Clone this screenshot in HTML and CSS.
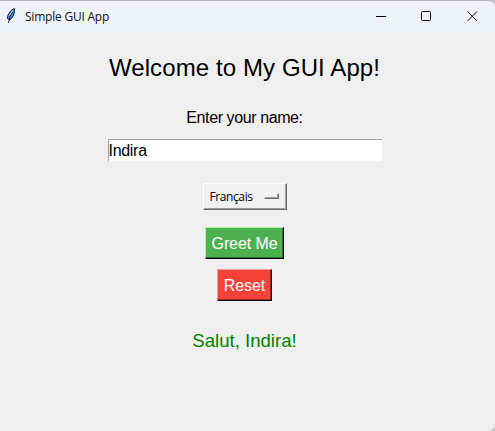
FILE: index.html
```html
<!DOCTYPE html>
<html lang="en">
<head>
<meta charset="utf-8">
<title>Simple GUI App</title>
<link rel="stylesheet" href="styles.css">
</head>
<body>
<div class="window">
  <header class="titlebar">
    <svg class="feather" width="10" height="17" viewBox="0 0 10 17">
      <path d="M8.500 1.500C5 3 1.500 6.500 1.500 11.500L3.500 13C7 11 9 6 8.500 1.500Z" fill="#4b8fe0" stroke="#10151c" stroke-width="1"/>
      <path d="M6.500 5L4 9.500L2.500 16" fill="none" stroke="#10151c" stroke-width="0.900"/>
      <path d="M6.500 3.800L3.200 8.500" stroke="#b9dcff" stroke-width="0.900"/>
    </svg>
    <span class="caption">Simple GUI App</span>
    <svg class="ctl" width="46" height="31" viewBox="0 0 46 31"><path d="M18 15.500H28" stroke="#000"/></svg>
    <svg class="ctl" width="46" height="31" viewBox="0 0 46 31"><rect x="17.500" y="10.500" width="9" height="9" rx="1" fill="none" stroke="#000"/></svg>
    <svg class="ctl" width="45" height="31" viewBox="0 0 45 31"><path d="M17.500 10.500L27 20M27 10.500L17.500 20" stroke="#000"/></svg>
  </header>
  <main class="content">
    <h1 class="heading">Welcome to My GUI App!</h1>
    <label class="label" for="name">Enter your name:</label>
    <input class="entry" id="name" type="text" value="Indira">
    <button class="option"><span>Français</span><i class="indicator"></i></button>
    <button class="btn greet">Greet Me</button>
    <button class="btn reset">Reset</button>
    <p class="result">Salut, Indira!</p>
  </main>
</div>
</body>
</html>
```
FILE: styles.css
```css
* { box-sizing: border-box; }
body { margin: 0; background: #c4c5c6; font-family: "Liberation Sans", sans-serif; }
.window {
  height: 431px;
  background: #efefef;
  border-top: 1px solid #b2b4b6;
  border-radius: 0 7px 7px 0;
  overflow: hidden;
}
.titlebar { display: flex; height: 31px; background: #eef3f9; }
.feather { margin: 6px 9px 0 6px; flex: none; }
.caption { flex: 1; font: 12px/31px "Open Sans", sans-serif; letter-spacing: -0.22px; color: #111; white-space: nowrap; }
.ctl { flex: none; }
.content { display: flex; flex-direction: column; align-items: center; padding-right: 6px; }
.heading { margin: 20px 0 0; font-size: 24px; font-weight: 400; line-height: 32px; letter-spacing: 0.1px; white-space: nowrap; }
.label { margin-top: 22px; font-size: 16px; line-height: 24px; letter-spacing: -0.4px; }
.entry {
  width: 274px; height: 22px; margin-top: 9px; padding: 1px 0 0;
  border: 0; border-top: 1px solid #a0a0a0; border-left: 1px solid #a0a0a0; border-radius: 0;
  background: #fff; font: 16px "Liberation Sans", sans-serif; letter-spacing: -0.3px; color: #000;
}
.option {
  display: flex; align-items: center; justify-content: space-between;
  width: 84px; height: 27px; margin-top: 22px; padding: 0 7px 0 6px;
  border: 1px solid; border-color: #fff #696969 #696969 #fff;
  box-shadow: inset -1px -1px #a0a0a0;
  background: #f0f0f0; font: 12px "Open Sans", sans-serif; letter-spacing: -0.4px; color: #000;
}
.indicator {
  width: 15px; height: 6px; margin-top: -2px;
  border: 1px solid; border-color: #fff #696969 #696969 #fff;
  box-shadow: inset -1px -1px #a0a0a0;
}
.btn {
  height: 32px; padding: 1px 0 0; border: 1px solid; border-radius: 0;
  font: 16px "Liberation Sans", sans-serif; letter-spacing: -0.1px; color: #fff; white-space: nowrap;
}
.greet { width: 79px; margin-top: 17px; background: #4caf50; border-color: #a6f5a9 #000 #000 #a6f5a9; box-shadow: inset -1px -1px #307033; }
.reset { width: 55px; margin-top: 10px; background: #f44336; border-color: #ff9d95 #000 #000 #ff9d95; box-shadow: inset -1px -1px #9b2b22; }
.result { margin: 28px 0 0; font-size: 18.6px; line-height: 24px; color: #008000; }
```
